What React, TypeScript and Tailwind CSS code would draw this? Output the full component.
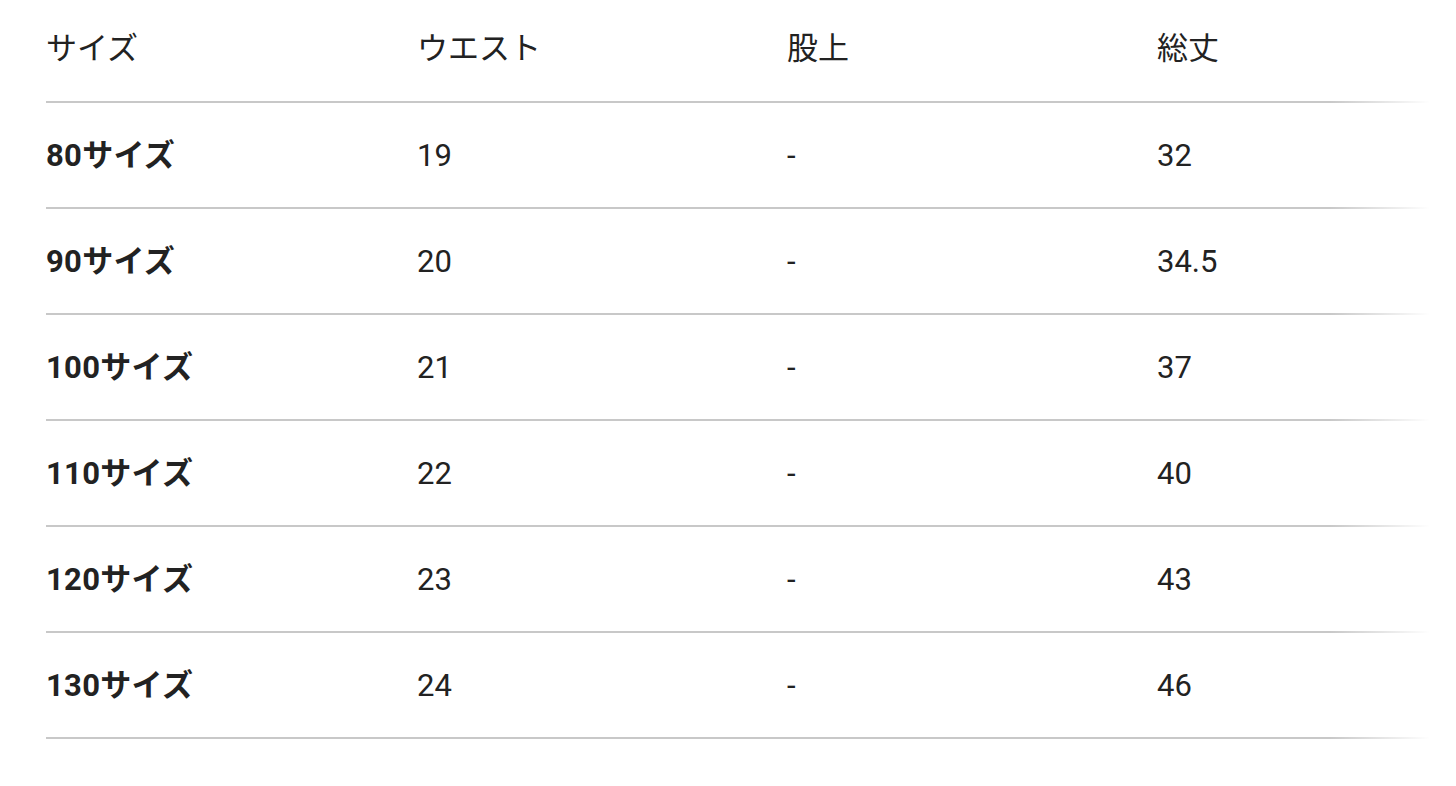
const HEADERS = ['サイズ', 'ウエスト', '股上', '総丈'];

const ROWS = [
  ['80サイズ', '19', '-', '32'],
  ['90サイズ', '20', '-', '34.5'],
  ['100サイズ', '21', '-', '37'],
  ['110サイズ', '22', '-', '40'],
  ['120サイズ', '23', '-', '43'],
  ['130サイズ', '24', '-', '46'],
];

export default function App() {
  return (
    <div
      className="min-h-screen bg-white pl-[46px] pr-[26px] text-[#222]"
      style={{ fontFamily: 'Roboto, "Noto Sans CJK JP", sans-serif' }}
    >
      <div className="relative overflow-hidden">
        <div className="min-w-[1480px]">
          {/* header */}
          <div className="grid h-[103px] grid-cols-[371px_370px_370px_1fr] items-center border-b-2 border-[#c8c8c8] text-[31px] font-normal">
            {HEADERS.map((h) => (
              <div key={h} className="-mt-[2px]">{h}</div>
            ))}
          </div>

          {ROWS.map((r) => (
            <div
              key={r[0]}
              className="grid h-[106px] grid-cols-[371px_370px_370px_1fr] items-center border-b-2 border-[#c8c8c8] text-[31px]"
            >
              <div className="pt-[2px] font-bold tracking-[0.3px]">{r[0]}</div>
              <div className="pt-[2px]">{r[1]}</div>
              <div className="pt-[2px]">{r[2]}</div>
              <div className="pt-[2px]">{r[3]}</div>
            </div>
          ))}
        </div>

        {/* scroll fade on the right */}
        <div className="pointer-events-none absolute inset-y-0 right-0 w-[100px] bg-gradient-to-l from-white to-transparent" />
      </div>
    </div>
  );
}
